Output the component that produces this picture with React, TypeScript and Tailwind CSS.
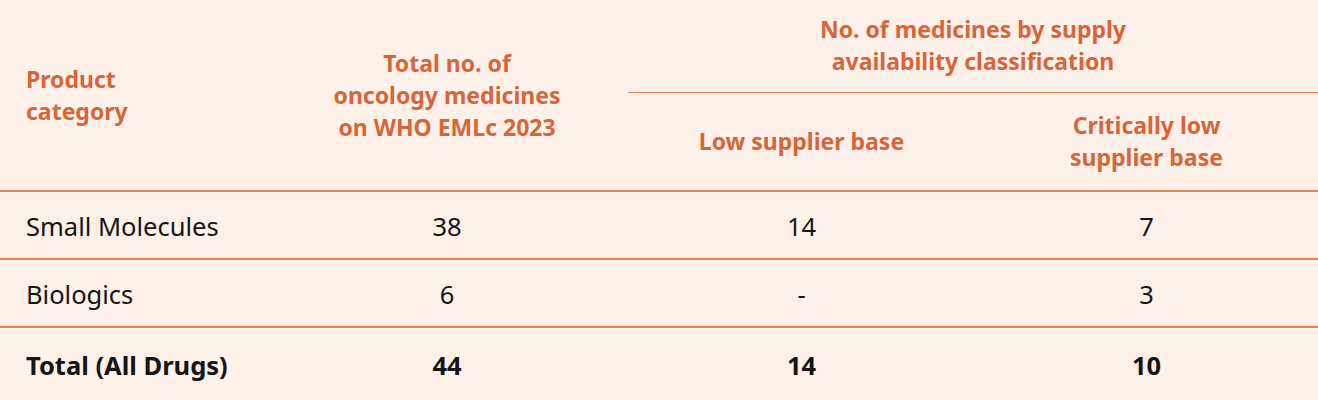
import React from 'react'

type Row = {
  category: string
  total: string
  low: string
  critical: string
  bold?: boolean
}

const rows: Row[] = [
  { category: 'Small Molecules', total: '38', low: '14', critical: '7' },
  { category: 'Biologics', total: '6', low: '-', critical: '3' },
  { category: 'Total (All Drugs)', total: '44', low: '14', critical: '10', bold: true },
]

export default function App() {
  return (
    <div className="w-[1318px] h-[400px] bg-[#fcf0e9] overflow-hidden" style={{ fontFamily: '"Noto Sans", "Open Sans", sans-serif' }}>
      <table className="w-full border-collapse table-fixed">
        <colgroup>
          <col className="w-[266px]" />
          <col className="w-[362px]" />
          <col className="w-[347px]" />
          <col />
        </colgroup>
        <thead className="text-[#d6653a] font-bold text-[23px] leading-[32px]">
          <tr className="h-[92px]">
            <th rowSpan={2} className="text-left align-middle pl-[26px] font-bold border-b-2 border-[#e4845a]">
              Product
              <br />
              category
            </th>
            <th rowSpan={2} className="text-center align-middle font-bold border-b-2 border-[#e4845a]">
              Total no. of
              <br />
              oncology medicines
              <br />
              on WHO EMLc 2023
            </th>
            <th colSpan={2} className="text-center align-middle font-bold border-b border-[#e4845a] pb-[1px]">
              No. of medicines by supply
              <br />
              availability classification
            </th>
          </tr>
          <tr className="h-[99px]">
            <th className="text-center align-middle font-bold border-b-2 border-[#e4845a]">Low supplier base</th>
            <th className="text-center align-middle font-bold border-b-2 border-[#e4845a]">
              Critically low
              <br />
              supplier base
            </th>
          </tr>
        </thead>
        <tbody className="text-[#151515] text-[25.5px]">
          {rows.map((r, i) => (
            <tr
              key={r.category}
              className={`${i < rows.length - 1 ? 'h-[68px] border-b-2 border-[#e4845a]' : 'h-[72px]'} ${r.bold ? 'font-bold' : ''}`}
            >
              <td className="pl-[26px] pt-[3px] align-middle">{r.category}</td>
              <td className="text-center pt-[3px] align-middle">{r.total}</td>
              <td className="text-center pt-[3px] align-middle">{r.low}</td>
              <td className="text-center pt-[3px] align-middle">{r.critical}</td>
            </tr>
          ))}
        </tbody>
      </table>
    </div>
  )
}
